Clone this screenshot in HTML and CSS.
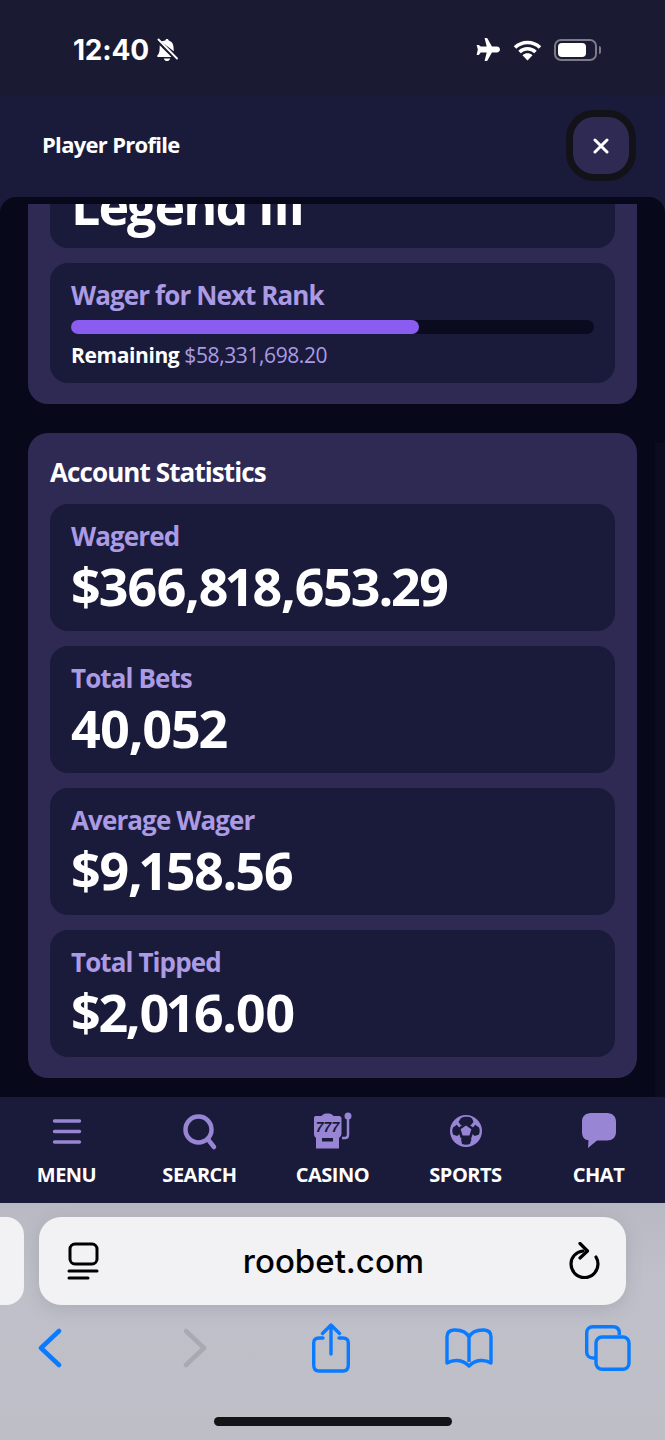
FILE: index.html
```html
<!DOCTYPE html>
<html lang="en">
<head>
    <title>Player Profile</title>
    <meta charset="UTF-8">
    <meta name="viewport" content="width=device-width, initial-scale=1">
    <link rel="stylesheet" href="styles.css">
</head>
<body>
<div class="page">

    <div class="status">
        <div class="status-left">
            <span class="clock">12:40</span>
            <svg class="bell" viewBox="0 0 22 24" width="22" height="24">
                <path fill="#fff" d="M11 1c1 0 1.600.7 1.700 1.600 3 .8 4.600 3.200 4.800 6.400l.3 4.200L5 3.500C6 3.100 7.500 2.800 9.300 2.600 9.400 1.700 10 1 11 1zM3.800 6.800l12.300 12.300H2.300c-1 0-1.400-1-.8-1.800 1.300-1.500 2-3 2.100-6.300zM7.800 20.400h6.400c-.3 1.500-1.600 2.600-3.200 2.600s-2.900-1.100-3.200-2.600z"/>
                <path stroke="#1a1a33" stroke-width="1.500" d="M0 2.500 20 22.500"/>
                <path stroke="#fff" stroke-width="1.800" stroke-linecap="round" d="M2.500 1.500 21 20.500"/>
            </svg>
        </div>
        <div class="status-right">
            <svg class="ico-plane" viewBox="0 0 28 26" width="27" height="25">
                <path fill="#fff" d="M12 1h2.200c.4 0 .7.200.8.500L19.600 10h5.200c1.700 0 3.200 1.300 3.200 3s-1.500 3-3.200 3h-5.200L15 24.500c-.1.300-.4.500-.8.500H12l2.200-9H8l-2 2.800H3.700L5 13 3.700 8.200H6L8 10h6.200z"/>
            </svg>
            <svg class="ico-wifi" viewBox="0 0 28 22" width="29" height="22">
                <path fill="none" stroke="#fff" stroke-width="3.600" d="M1.500 8.500c7-6.700 18-6.700 25 0M6 13c4.600-4.300 11.400-4.300 16 0"/>
                <path fill="#fff" d="M14 21.500l-5-5.300c3-2.500 7-2.500 10 0z"/>
            </svg>
            <div class="battery"><div class="battery-fill"></div></div>
            <div class="battery-tip"></div>
        </div>
    </div>

    <header class="head">
        <h1 class="title">Player Profile</h1>
        <button class="close">
            <svg viewBox="0 0 16 16" width="16" height="16">
                <path stroke="#fff" stroke-width="3" stroke-linecap="round" d="M2 2l12 12M14 2 2 14"/>
            </svg>
        </button>
    </header>

    <main class="panel">
        <div class="scrollbar"></div>
        <div class="scroller">
            <section class="card card-rank">
                <div class="box box-rank">
                    <div class="value">Legend III</div>
                </div>
                <div class="box box-next">
                    <div class="label">Wager for Next Rank</div>
                    <div class="bar"><div class="bar-fill" style="width: 66.6%"></div></div>
                    <div class="remaining"><b>Remaining</b> <span>$58,331,698.20</span></div>
                </div>
            </section>

            <section class="card">
                <h2 class="card-title">Account Statistics</h2>
                <div class="box stat">
                    <div class="label">Wagered</div>
                    <div class="value">$366,818,653.29</div>
                </div>
                <div class="box stat">
                    <div class="label">Total Bets</div>
                    <div class="value">40,052</div>
                </div>
                <div class="box stat">
                    <div class="label">Average Wager</div>
                    <div class="value">$9,158.56</div>
                </div>
                <div class="box stat">
                    <div class="label">Total Tipped</div>
                    <div class="value">$2,016.00</div>
                </div>
            </section>
        </div>
    </main>

    <nav class="nav">
        <a class="nav-item">
            <svg viewBox="0 0 40 40" width="40" height="40">
                <path stroke="#9885d3" stroke-width="3.400" stroke-linecap="round" d="M7.500 10h25M7.500 20.500h25M7.500 31h25"/>
            </svg>
            <span>Menu</span>
        </a>
        <a class="nav-item">
            <svg viewBox="0 0 40 40" width="40" height="40">
                <circle cx="18.500" cy="18.500" r="13" fill="none" stroke="#9885d3" stroke-width="4.500"/>
                <path stroke="#9885d3" stroke-width="4.500" stroke-linecap="round" d="M28.500 29 34 36"/>
            </svg>
            <span>Search</span>
        </a>
        <a class="nav-item">
            <svg viewBox="0 0 40 40" width="40" height="40">
                <path fill="#9885d3" d="M1 7C1 5.500 2 5 3 5h5.500C10 3 12 2.500 14.500 2.500s4.500.5 6 2.500H26c1.500 0 2.500 1 2.500 2.500v15c0 2-1 3-2.500 4.500V37.500H3V27C1.500 25.500 1 24.500 1 22.500z"/>
                <text class="sevens" x="14.500" y="21">777</text>
                <rect x="9" y="27" width="11" height="3.500" fill="#1a1b3b"/>
                <circle cx="35" cy="5" r="3.500" fill="#9885d3"/>
                <path fill="none" stroke="#9885d3" stroke-width="2.500" d="M35 7v17c0 2-1 3-3 3h-3"/>
            </svg>
            <span>Casino</span>
        </a>
        <a class="nav-item">
            <svg viewBox="0 0 40 40" width="40" height="40">
                <circle cx="20" cy="20" r="16" fill="#9885d3"/>
                <path fill="#1a1b3b" d="M15 7c3-1.700 8-1.700 11 .2l1.500 3.800-3 3.500-4.500-1.500-5 1.500-2.500-3.500zM7 16.500l3.800-2.800 2.700 3.300v6l-2.200 2-4-1.200c-1.300-2.300-1.300-5-.3-7.300zM33 16.500l-3.800-2.800-2.700 3.300v6l2.200 2 4-1.200c1.300-2.300 1.300-5 .3-7.300zM15 28.300l2-2.300h6.500l2 2.300-1.500 4.700c-2.500.9-5.500.9-8 0z"/>
                <path fill="#1a1b3b" d="M20 11.500l8.500 6-3.200 9.800H14.700L11.500 17.500z"/>
                <path fill="#9885d3" d="M20 14.500l5.400 3.800-2 6.200h-6.800l-2-6.200z"/>
            </svg>
            <span>Sports</span>
        </a>
        <a class="nav-item">
            <svg viewBox="0 0 40 40" width="40" height="40">
                <path fill="#9885d3" d="M12 2h16c5.500 0 9 3.500 9 8.500v10.500c0 5-3.500 8.500-9 8.500H18l-9 7.500.5-7.700C5 28.800 3 25.500 3 21V10.500C3 5.500 6.500 2 12 2z"/>
            </svg>
            <span>Chat</span>
        </a>
    </nav>

    <div class="safari">
        <div class="tabs-row">
            <div class="tab-prev"></div>
            <div class="url">
                <svg viewBox="0 0 32 38" width="32" height="38">
                    <rect x="3" y="2" width="27" height="20" rx="5" fill="none" stroke="#000" stroke-width="3"/>
                    <path stroke="#000" stroke-width="3" stroke-linecap="round" d="M2 29h28M2 36h19"/>
                </svg>
                <span class="url-text">roobet.com</span>
                <svg viewBox="0 0 32 38" width="32" height="38">
                    <path fill="none" stroke="#000" stroke-width="3.200" stroke-linecap="round" d="M15 9C8 10 3 15 3 22a13.500 13.500 0 0 0 27 0c0-2.500-.5-4.500-2-7"/>
                    <path fill="none" stroke="#000" stroke-width="3.200" stroke-linecap="round" stroke-linejoin="round" d="M12 1.500 19.500 9 12 16"/>
                </svg>
            </div>
        </div>
        <div class="tools">
            <svg class="tool-back" viewBox="0 0 24 40" width="24" height="40">
                <path fill="none" stroke="#0a7bff" stroke-width="4.500" stroke-linecap="round" stroke-linejoin="round" d="M21 3 3 20l18 17"/>
            </svg>
            <svg class="tool-fwd" viewBox="0 0 24 40" width="24" height="40">
                <path fill="none" stroke="#a9a9af" stroke-width="4.500" stroke-linecap="round" stroke-linejoin="round" d="M3 3l18 17L3 37"/>
            </svg>
            <svg class="tool-share" viewBox="0 0 38 50" width="38" height="50">
                <path fill="none" stroke="#0a7bff" stroke-width="3.400" stroke-linecap="round" d="M11 15H7c-3.500 0-5.300 1.800-5.300 5v22c0 4 1.800 6 5.300 6h24c3.500 0 5.300-2 5.300-6V20c0-3.200-1.800-5-5.300-5h-4"/>
                <path fill="none" stroke="#0a7bff" stroke-width="3.400" stroke-linecap="round" stroke-linejoin="round" d="M19 31V3M10.500 10.500 19 2l8.500 8.500"/>
            </svg>
            <svg class="tool-book" viewBox="0 0 48 40" width="48" height="40">
                <path fill="none" stroke="#0a7bff" stroke-width="3.400" stroke-linejoin="round" d="M24 9C21 3 15 1.800 9 2 4.500 2.200 2 4.500 2 9v26c6-3.500 15-4 22 3 7-7 16-6.500 22-3V9c0-4.500-2.500-6.800-7-7-6-.2-12 1-15 7zM24 9v25"/>
            </svg>
            <svg class="tool-tabs" viewBox="0 0 46 46" width="46" height="46">
                <path fill="none" stroke="#0a7bff" stroke-width="3.400" d="M10 33H8c-4 0-6.300-2.300-6.300-6V8c0-4 2.300-6.300 6.300-6.300h20c4 0 6.300 2.300 6.300 6.300v2"/>
                <rect x="11" y="12" width="33" height="32.300" rx="6" fill="none" stroke="#0a7bff" stroke-width="3.400"/>
            </svg>
        </div>
        <div class="home-bar"></div>
    </div>

</div>
</body>
</html>
```

FILE: styles.css
```css
* {
    box-sizing: border-box;
}

html, body {
    margin: 0;
    padding: 0;
    background: #1a1a33;
}

body {
    font-family: "Open Sans", sans-serif;
    color: #fff;
}

.page {
    width: 665px;
    height: 1440px;
    display: flex;
    flex-direction: column;
    overflow: hidden;
    background: #1a1b3b;
}

/* phone status bar */
.status {
    height: 95px;
    flex: none;
    background: #1a1a33;
    display: flex;
    justify-content: space-between;
    align-items: center;
    padding: 4px 64px 0 73px;
}

.status-left {
    display: flex;
    align-items: center;
    gap: 7px;
}

.clock {
    font-family: Inter, sans-serif;
    font-weight: 700;
    font-size: 28px;
    letter-spacing: -0.2px;
}

.status-right {
    display: flex;
    align-items: center;
}

.ico-plane {
    margin-right: 13px;
}

.ico-wifi {
    margin-right: 12px;
}

.battery {
    width: 43px;
    height: 22px;
    border: 2px solid #7b7b8a;
    border-radius: 7px;
    padding: 2px;
}

.battery-fill {
    width: 28px;
    height: 100%;
    background: #fff;
    border-radius: 4px;
}

.battery-tip {
    width: 2px;
    height: 8px;
    margin-left: 2px;
    background: #7b7b8a;
    border-radius: 0 2px 2px 0;
}

/* modal header */
.head {
    height: 102px;
    flex: none;
    background: #1a1b3b;
    display: flex;
    justify-content: space-between;
    align-items: center;
    padding: 0 29px 1px 42px;
}

.title {
    margin: 0 0 4px;
    font-size: 22px;
    font-weight: 700;
    letter-spacing: -0.7px;
}

.close {
    width: 70px;
    height: 71px;
    padding: 0;
    background: #2f2a54;
    border: 7px solid #121218;
    border-radius: 28px;
    display: flex;
    align-items: center;
    justify-content: center;
}

/* scrolling area */
.panel {
    height: 900px;
    flex: none;
    position: relative;
    padding-top: 7px;
    background: #07081a;
    border-radius: 16px 16px 0 0;
}

.scrollbar {
    position: absolute;
    right: 0;
    top: 246px;
    bottom: 0;
    width: 10px;
    background: #0b0c1f;
}

.scroller {
    height: 893px;
    padding: 0 28px;
    overflow: hidden;
    position: relative;
}

.card {
    background: #2f2a54;
    border-radius: 20px;
    padding: 23px 22px 21px;
    display: flex;
    flex-direction: column;
    gap: 15px;
}

.card-rank {
    margin-top: -125px;
    margin-bottom: 29px;
}

.card-title {
    margin: 0 0 1px;
    font-size: 26px;
    line-height: 32px;
    font-weight: 700;
    letter-spacing: -0.9px;
}

.box {
    background: #1a1b3b;
    border-radius: 18px;
    padding: 14px 21px 13px;
}

.box-rank {
    height: 146px;
    display: flex;
    align-items: flex-end;
    padding-bottom: 13px;
}

.box-next {
    height: 120px;
}

.stat {
    height: 127px;
}

.label {
    color: #ab9ae4;
    font-size: 26px;
    line-height: 36px;
    font-weight: 700;
    letter-spacing: -0.9px;
}

.value {
    font-size: 52px;
    line-height: 60px;
    font-weight: 700;
    letter-spacing: -2px;
    font-variant-numeric: proportional-nums;
}

.stat .value {
    margin-top: 2px;
}

.bar {
    height: 14px;
    margin-top: 7px;
    background: #0a0b1e;
    border-radius: 7px;
}

.bar-fill {
    height: 100%;
    background: #8b5cf0;
    border-radius: 7px;
}

.remaining {
    margin-top: 6px;
    font-size: 21px;
    line-height: 30px;
    letter-spacing: -0.4px;
}

.remaining b {
    font-weight: 700;
}

.remaining span {
    color: #ab9ae4;
    font-weight: 500;
}

/* bottom navigation */
.nav {
    height: 106px;
    flex: none;
    background: #1a1b3b;
    display: grid;
    grid-template-columns: repeat(5, 133px);
}

.nav-item {
    display: flex;
    flex-direction: column;
    align-items: center;
    padding-top: 14px;
}

.nav-item span {
    margin-top: 11px;
    font-size: 20px;
    line-height: 26px;
    font-weight: 700;
    letter-spacing: -0.5px;
    text-transform: uppercase;
}

.sevens {
    font-family: "Liberation Sans", sans-serif;
    font-size: 14px;
    font-weight: 700;
    font-style: italic;
    text-anchor: middle;
    fill: #1a1b3b;
}

/* safari toolbar */
.safari {
    flex: 1;
    background: linear-gradient(#b9b9c3, #c0c0ca 35%, #bebec7);
    padding-top: 14px;
    position: relative;
}

.tabs-row {
    display: flex;
    gap: 15px;
}

.tab-prev {
    width: 24px;
    height: 88px;
    background: #f2f2f4;
    border-radius: 0 18px 18px 0;
}

.url {
    width: 587px;
    height: 88px;
    background: #f2f2f4;
    border-radius: 22px;
    display: flex;
    align-items: center;
    justify-content: space-between;
    padding: 0 26px 0 28px;
    box-shadow: 0 4px 18px rgba(90, 90, 110, 0.2);
}

.url-text {
    font-family: Inter, sans-serif;
    font-size: 33px;
    font-weight: 500;
    color: #000;
}

.tools {
    display: flex;
    align-items: center;
    margin-top: 18px;
    padding-left: 38px;
    height: 50px;
}

.tool-fwd {
    margin-left: 121px;
}

.tool-share {
    margin-left: 105px;
}

.tool-book {
    margin-left: 95px;
}

.tool-tabs {
    margin-left: 92px;
}

.home-bar {
    position: absolute;
    left: 214px;
    bottom: 14px;
    width: 238px;
    height: 9px;
    background: #141416;
    border-radius: 5px;
}
```
